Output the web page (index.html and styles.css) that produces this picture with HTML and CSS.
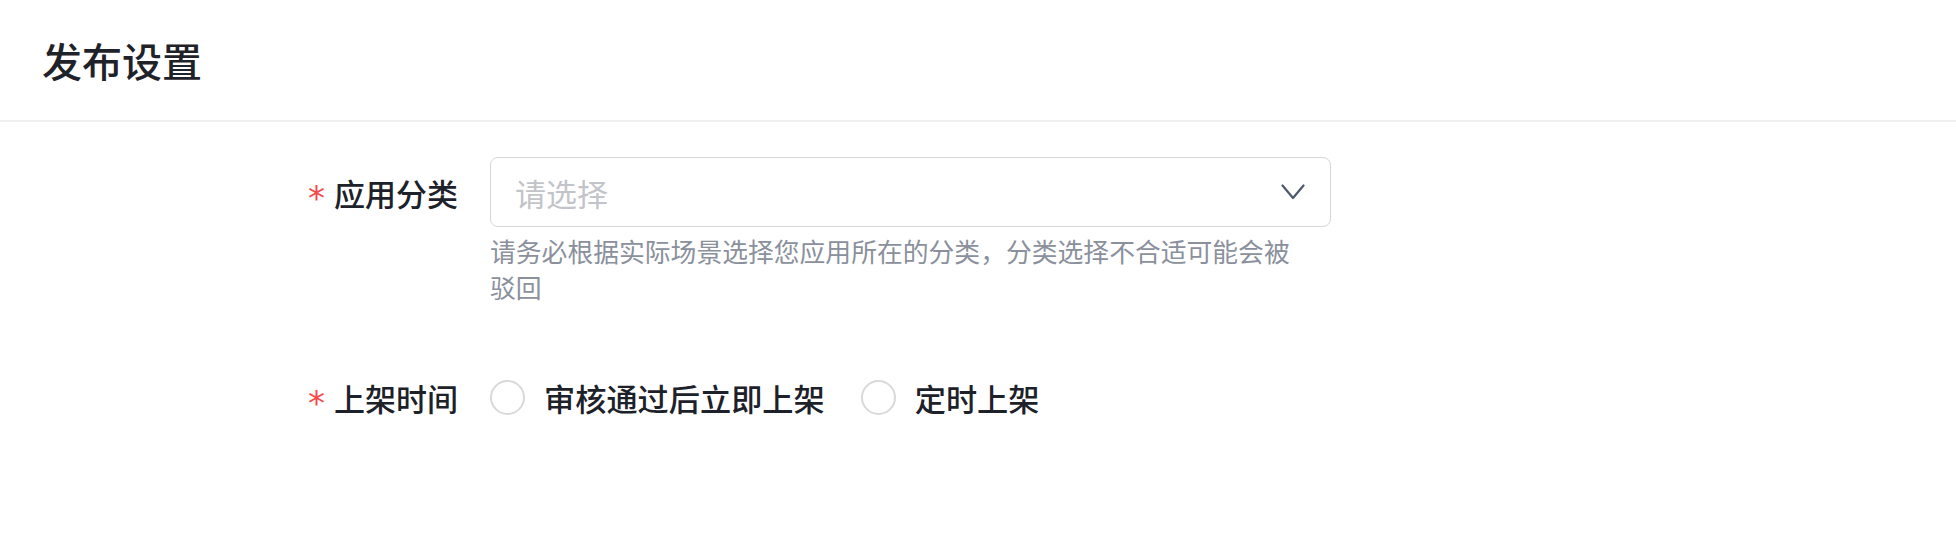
FILE: index.html
```html
<!DOCTYPE html>
<html lang="zh-CN">
<head>
<meta charset="utf-8">
<title>发布设置</title>
<link rel="stylesheet" href="styles.css">
</head>
<body>
<div class="page">
  <header class="header">
    <h1 class="title">发布设置</h1>
  </header>
  <form class="form">
    <div class="label"><span class="req">*</span><span>应用分类</span></div>
    <div class="control">
      <div class="select">
        <span class="placeholder">请选择</span>
        <svg class="chevron" width="24" height="16" viewBox="0 0 24 16"><polyline points="1.5,1.5 12,14 22.5,1.5" fill="none" stroke="#4e5969" stroke-width="2.2" stroke-linecap="round" stroke-linejoin="round"/></svg>
      </div>
      <p class="help">请务必根据实际场景选择您应用所在的分类，分类选择不合适可能会被驳回</p>
    </div>

    <div class="label label-2"><span class="req">*</span><span>上架时间</span></div>
    <div class="control control-2">
      <div class="radios">
        <label class="radio"><span class="circle"></span><span class="radio-text">审核通过后立即上架</span></label>
        <label class="radio"><span class="circle"></span><span class="radio-text">定时上架</span></label>
      </div>
    </div>
  </form>
</div>
</body>
</html>
```

FILE: styles.css
```css
html, body {
  margin: 0;
  padding: 0;
  background: #ffffff;
}
body {
  font-family: "Noto Sans CJK SC", "Noto Sans", sans-serif;
  color: #1d2129;
}
.page {
  width: 1956px;
}
.header {
  height: 120px;
  display: flex;
  align-items: center;
  padding-left: 42px;
  border-bottom: 2px solid #f0f0f0;
}
.title {
  margin: 0;
  font-size: 40px;
  line-height: 48px;
  font-weight: 500;
  color: #1f2329;
}
.form {
  display: grid;
  grid-template-columns: 458px 841px;
  column-gap: 32px;
  align-items: start;
  padding-top: 35px;
}
.label {
  height: 70px;
  display: flex;
  align-items: center;
  justify-content: flex-end;
  font-size: 31px;
  font-weight: 500;
  color: #1d2129;
}
.req {
  color: #f5484a;
  font-size: 34px;
  line-height: 1;
  font-weight: 400;
  font-family: "DejaVu Sans", sans-serif;
  margin-right: 9px;
  padding-top: 12px;
}
.select {
  box-sizing: border-box;
  height: 70px;
  border: 1.5px solid #d6d6d6;
  border-radius: 8px;
  display: flex;
  align-items: center;
  justify-content: space-between;
  padding: 0 25px 0 24px;
}
.placeholder {
  font-size: 31px;
  color: #c2c4c9;
}
.chevron {
  display: block;
}
.help {
  margin: 6px 0 0;
  width: 815px;
  font-size: 25.8px;
  line-height: 36px;
  color: #8a909c;
}
.label-2,
.control-2 {
  margin-top: 57px;
}
.radios {
  height: 70px;
  display: flex;
  align-items: center;
  gap: 36px;
}
.radio {
  display: flex;
  align-items: center;
  gap: 19px;
  font-size: 31.2px;
  font-weight: 500;
  color: #1d2129;
}
.circle {
  box-sizing: border-box;
  width: 35px;
  height: 35px;
  border: 2px solid #d9d9d9;
  border-radius: 50%;
  background: #fff;
}
```
